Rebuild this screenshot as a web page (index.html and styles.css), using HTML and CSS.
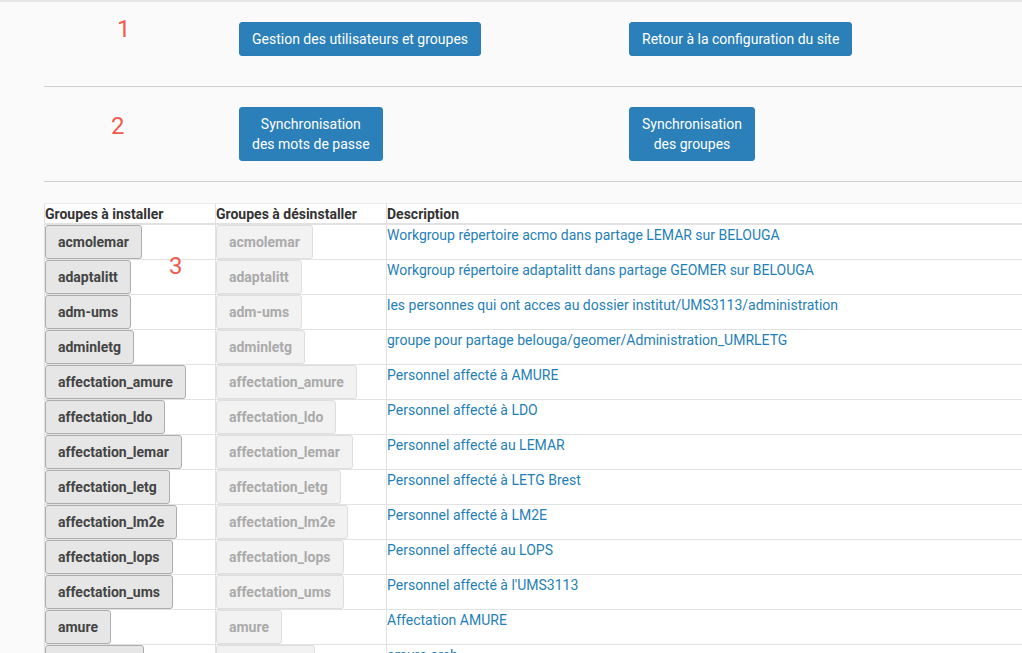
FILE: index.html
```html
<!DOCTYPE html>
<html lang="fr">
<head>
<meta charset="utf-8">
<title>Groupes</title>
<link rel="stylesheet" href="styles.css">
</head>
<body>
<div class="topline"></div>
<div class="page">
  <section class="step step-1">
    <div class="num num-1">1</div>
    <div class="cell"><a class="btn">Gestion des utilisateurs et groupes</a></div>
    <div class="cell"><a class="btn">Retour à la configuration du site</a></div>
  </section>
  <hr class="sep">
  <section class="step step-2">
    <div class="num num-2">2</div>
    <div class="cell"><a class="btn">Synchronisation<br>des mots de passe</a></div>
    <div class="cell"><a class="btn">Synchronisation<br>des groupes</a></div>
  </section>
  <hr class="sep">
  <div class="tablewrap">
    <div class="num num-3">3</div>
    <table class="groups">
      <thead>
        <tr><th class="c1">Groupes à installer</th><th class="c2">Groupes à désinstaller</th><th>Description</th></tr>
      </thead>
      <tbody>
        <tr><td><button class="gbtn">acmolemar</button></td><td><button class="gbtn off">acmolemar</button></td><td class="desc">Workgroup répertoire acmo dans partage LEMAR sur BELOUGA</td></tr>
        <tr><td><button class="gbtn">adaptalitt</button></td><td><button class="gbtn off">adaptalitt</button></td><td class="desc">Workgroup répertoire adaptalitt dans partage GEOMER sur BELOUGA</td></tr>
        <tr><td><button class="gbtn">adm-ums</button></td><td><button class="gbtn off">adm-ums</button></td><td class="desc">les personnes qui ont acces au dossier institut/UMS3113/administration</td></tr>
        <tr><td><button class="gbtn">adminletg</button></td><td><button class="gbtn off">adminletg</button></td><td class="desc">groupe pour partage belouga/geomer/Administration_UMRLETG</td></tr>
        <tr><td><button class="gbtn">affectation_amure</button></td><td><button class="gbtn off">affectation_amure</button></td><td class="desc">Personnel affecté à AMURE</td></tr>
        <tr><td><button class="gbtn">affectation_ldo</button></td><td><button class="gbtn off">affectation_ldo</button></td><td class="desc">Personnel affecté à LDO</td></tr>
        <tr><td><button class="gbtn">affectation_lemar</button></td><td><button class="gbtn off">affectation_lemar</button></td><td class="desc">Personnel affecté au LEMAR</td></tr>
        <tr><td><button class="gbtn">affectation_letg</button></td><td><button class="gbtn off">affectation_letg</button></td><td class="desc">Personnel affecté à LETG Brest</td></tr>
        <tr><td><button class="gbtn">affectation_lm2e</button></td><td><button class="gbtn off">affectation_lm2e</button></td><td class="desc">Personnel affecté à LM2E</td></tr>
        <tr><td><button class="gbtn">affectation_lops</button></td><td><button class="gbtn off">affectation_lops</button></td><td class="desc">Personnel affecté au LOPS</td></tr>
        <tr><td><button class="gbtn">affectation_ums</button></td><td><button class="gbtn off">affectation_ums</button></td><td class="desc">Personnel affecté à l'UMS3113</td></tr>
        <tr><td><button class="gbtn">amure</button></td><td><button class="gbtn off">amure</button></td><td class="desc">Affectation AMURE</td></tr>
        <tr><td><button class="gbtn">amure-arch</button></td><td><button class="gbtn off">amure-arch</button></td><td class="desc">amure-arch</td></tr>
      </tbody>
    </table>
  </div>
</div>
</body>
</html>
```
FILE: styles.css
```css
html, body {
  margin: 0;
  padding: 0;
  background: #fafafa;
  font-family: Roboto, "Liberation Sans", sans-serif;
  font-size: 14px;
  color: #333;
  overflow: hidden;
}
.topline {
  height: 2px;
  background: #e6e6e6;
}
.page {
  padding-left: 44px;
}
.step {
  display: grid;
  grid-template-columns: 195px 390px 1fr;
  align-items: start;
}
.step-1 {
  padding: 20px 0 30px;
}
.step-2 {
  padding: 20px 0 20px;
}
.num {
  color: #f25a4e;
  font-size: 24px;
  line-height: 24px;
  font-weight: 400;
}
.num-1 {
  padding-left: 73px;
  margin-top: -5px;
}
.num-2 {
  padding-left: 67px;
  margin-top: 7px;
}
.btn {
  display: inline-block;
  background: #2b80b9;
  color: #fff;
  border: 1px solid #2a7db5;
  border-radius: 3px;
  padding: 6px 12px;
  line-height: 20px;
  font-size: 14px;
  text-align: center;
  cursor: pointer;
  vertical-align: top;
}
.sep {
  margin: 0;
  border: 0;
  border-top: 1px solid #d0d0d0;
  height: 0;
}
.tablewrap {
  position: relative;
  margin-top: 21px;
  overflow: hidden;
}
.num-3 {
  position: absolute;
  left: 125px;
  top: 51px;
}
.groups {
  width: 1000px;
  border-collapse: collapse;
  background: #fff;
  table-layout: fixed;
}
.groups .c1, .groups .c2 {
  width: 170px;
}
.groups th {
  text-align: left;
  font-weight: 700;
  color: #333;
  padding: 2px 0 0;
  height: 17px;
  line-height: 17px;
  border: 1px solid #e2e2e2;
  border-bottom: 2px solid #e2e2e2;
  border-top: 1px solid #ececec;
}
.groups td {
  padding: 0;
  vertical-align: top;
  border: 1px solid #e2e2e2;
  border-top: 0;
  height: 34px;
}
.gbtn {
  display: block;
  font-family: Roboto, "Liberation Sans", sans-serif;
  font-size: 14px;
  font-weight: 700;
  line-height: 20px;
  padding: 6px 12px;
  margin: 0;
  height: 34px;
  color: #444;
  background: #e6e6e6;
  border: 1px solid #adadad;
  border-radius: 3px;
  cursor: pointer;
}
.gbtn.off {
  color: #aaa;
  background: #f2f2f2;
  border-color: #dedede;
}
.groups td.desc {
  color: #1f80b8;
  line-height: 16px;
  padding: 2px 0 0;
  height: 32px;
}
```
